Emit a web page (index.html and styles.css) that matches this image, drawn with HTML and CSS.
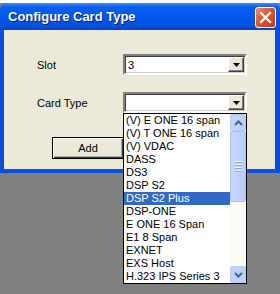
FILE: index.html
```html
<!DOCTYPE html>
<html lang="en">
<head>
  <meta charset="UTF-8">
  <title>Configure Card Type</title>
  <link rel="stylesheet" href="styles.css">
</head>
<body>
  <div class="strip"></div>
  <div class="window">
    <div class="titlebar">
      <span class="title">Configure Card Type</span>
      <button class="close">
        <svg width="13" height="13" viewBox="0 0 13 13"><path d="M2 2 L11 11 M11 2 L2 11" stroke="#fff" stroke-width="2.4" stroke-linecap="square"/></svg>
      </button>
    </div>
    <div class="client">
      <div class="row">
        <label>Slot</label>
        <div class="combo">
          <span class="value">3</span>
          <span class="arrow"><svg width="7" height="4" viewBox="0 0 7 4"><path d="M0 0 H7 L3.5 4 Z" fill="#000"/></svg></span>
        </div>
      </div>
      <div class="row">
        <label>Card Type</label>
        <div class="combo">
          <span class="value"></span>
          <span class="arrow"><svg width="7" height="4" viewBox="0 0 7 4"><path d="M0 0 H7 L3.5 4 Z" fill="#000"/></svg></span>
        </div>
      </div>
      <div class="actions">
        <button class="btn">Add</button>
      </div>
    </div>
  </div>

  <div class="dropdown">
    <ul class="items">
      <li>(V) E ONE 16 span</li>
      <li>(V) T ONE 16 span</li>
      <li>(V) VDAC</li>
      <li>DASS</li>
      <li>DS3</li>
      <li>DSP S2</li>
      <li class="selected">DSP S2 Plus</li>
      <li>DSP-ONE</li>
      <li>E ONE 16 Span</li>
      <li>E1 8 Span</li>
      <li>EXNET</li>
      <li>EXS Host</li>
      <li>H.323 IPS Series 3</li>
    </ul>
    <div class="scrollbar">
      <div class="sb-btn">
        <svg width="9" height="6" viewBox="0 0 9 6"><path d="M1 5 L4.5 1.5 L8 5" stroke="#4d6185" stroke-width="2" fill="none"/></svg>
      </div>
      <div class="sb-thumb">
        <span></span><span></span><span></span><span></span>
      </div>
      <div class="sb-track"></div>
      <div class="sb-btn">
        <svg width="9" height="6" viewBox="0 0 9 6"><path d="M1 1 L4.5 4.5 L8 1" stroke="#4d6185" stroke-width="2" fill="none"/></svg>
      </div>
    </div>
  </div>
</body>
</html>
```

FILE: styles.css
```css
body {
  margin: 0;
  background-color: #808080;
  font-family: "Liberation Sans", Arial, sans-serif;
  font-size: 11px;
  width: 280px;
  height: 294px;
  overflow: hidden;
  position: relative;
}

.strip {
  height: 3px;
  background-color: #fff;
}

.window {
  width: 280px;
  height: 170px;
  background-color: #0a4fdc;
  border-radius: 7px 7px 0 0;
  box-sizing: border-box;
  padding: 0 5px 4px 4px;
  display: flex;
  flex-direction: column;
}

.titlebar {
  flex: none;
  height: 27px;
  margin: 0 -5px 0 -4px;
  padding: 0 4px 0 8px;
  border-radius: 7px 7px 0 0;
  background: linear-gradient(#3a8cfa 0%, #0a5ff0 15%, #0058ee 50%, #0053e3 80%, #0046c8 100%);
  display: flex;
  align-items: center;
  justify-content: space-between;
}

.title {
  color: #fff;
  font-family: "Liberation Sans", Arial, sans-serif;
  font-weight: bold;
  font-size: 13px;
  text-shadow: 1px 1px 0 #0a1e6e;
}

.close {
  width: 21px;
  height: 21px;
  border: 1px solid #fff;
  border-radius: 3px;
  background: linear-gradient(135deg, #f08a6a 0%, #e0542c 45%, #c43a15 100%);
  display: flex;
  align-items: center;
  justify-content: center;
  padding: 0;
  margin-top: 1px;
}

.close svg {
  display: block;
}

.client {
  flex: 1;
  background-color: #ece9d8;
  padding-top: 24px;
  display: flex;
  flex-direction: column;
  gap: 17px;
}

.row {
  display: flex;
  align-items: center;
  height: 21px;
}

.row label {
  width: 86px;
  padding-left: 33px;
  color: #000;
}

.combo {
  width: 124px;
  height: 21px;
  box-sizing: border-box;
  background-color: #fff;
  border-style: solid;
  border-width: 2px;
  border-color: #808080 #fff #fff #808080;
  box-shadow: inset 1px 1px 0 #404040, inset -1px -1px 0 #d4d0c8;
  display: flex;
  align-items: center;
  justify-content: space-between;
  padding: 0 1px 0 3px;
}

.arrow {
  width: 16px;
  height: 15px;
  box-sizing: border-box;
  background-color: #ece9d8;
  border: 1px solid;
  border-color: #fff #404040 #404040 #fff;
  box-shadow: inset -1px -1px 0 #808080;
  display: flex;
  align-items: center;
  justify-content: center;
}

.arrow svg {
  display: block;
}

.actions {
  padding-left: 48px;
  padding-top: 7px;
}

.btn {
  width: 72px;
  height: 22px;
  font-family: inherit;
  font-size: 11px;
  background-color: #ece9d8;
  border: 1px solid #000;
  box-shadow: inset 1px 1px 0 #fff, inset -1px -1px 0 #404040, inset -2px -2px 0 #aca899;
  color: #000;
  padding: 0;
  display: block;
}

.dropdown {
  position: absolute;
  left: 123px;
  top: 113px;
  width: 124px;
  height: 171px;
  box-sizing: border-box;
  border: 1px solid #000;
  background-color: #fff;
  display: flex;
}

.items {
  list-style: none;
  margin: 0;
  padding: 0;
  flex: 1;
}

.items li {
  height: 13px;
  line-height: 13px;
  padding-left: 2px;
  white-space: nowrap;
  overflow: hidden;
  color: #000;
}

.items li.selected {
  background-color: #316ac5;
  color: #fff;
}

.scrollbar {
  width: 16px;
  display: flex;
  flex-direction: column;
  background-color: #fbfbf8;
}

.sb-btn {
  height: 17px;
  box-sizing: border-box;
  border: 1px solid #b6cbf7;
  border-radius: 2px;
  background: linear-gradient(90deg, #c4d5fc, #bad0fb);
  display: flex;
  align-items: center;
  justify-content: center;
}

.sb-btn svg {
  display: block;
}

.sb-thumb {
  height: 71px;
  box-sizing: border-box;
  border: 1px solid #a8bff2;
  border-radius: 2px;
  background: linear-gradient(90deg, #c8d7fc, #b9cffc);
  display: flex;
  flex-direction: column;
  align-items: center;
  justify-content: center;
  gap: 1px;
}

.sb-thumb span {
  width: 7px;
  height: 1px;
  background-color: #eef3fe;
  border-bottom: 1px solid #8caaea;
}

.sb-track {
  flex: 1;
}
```
